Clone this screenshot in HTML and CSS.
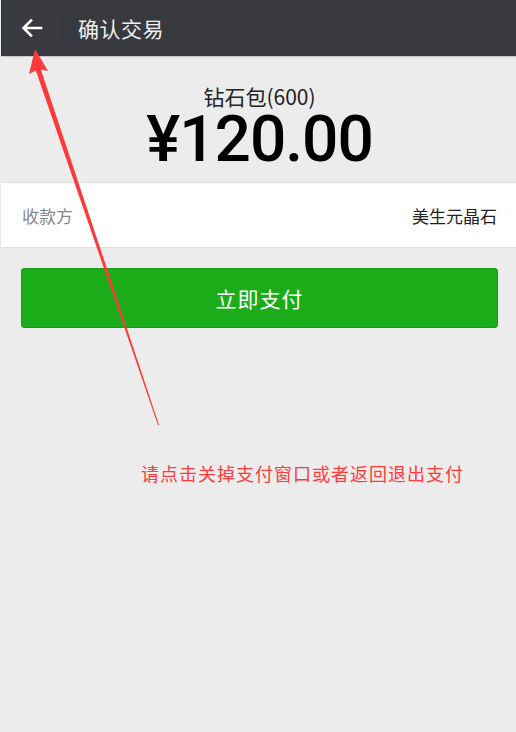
FILE: index.html
```html
<!DOCTYPE html>
<html lang="zh-CN">
<head>
<meta charset="utf-8">
<title>确认交易</title>
<link rel="stylesheet" href="styles.css">
</head>
<body>
<div class="page">
  <header class="topbar">
    <span class="back">
      <svg width="22" height="20" viewBox="0 0 22 20"><path d="M20 10H3M10 2.5L2.5 10L10 17.5" fill="none" stroke="#fff" stroke-width="2.6" stroke-linecap="square"/></svg>
    </span>
    <span class="divider"></span>
    <h1 class="title">确认交易</h1>
  </header>
  <section class="summary">
    <div class="product">钻石包(600)</div>
    <div class="price">¥120.00</div>
  </section>
  <div class="row">
    <span class="label">收款方</span>
    <span class="value">美生元晶石</span>
  </div>
  <div class="actions">
    <button class="pay">立即支付</button>
  </div>
  <p class="hint">请点击关掉支付窗口或者返回退出支付</p>
  <svg class="annot" width="516" height="732" viewBox="0 0 516 732">
    <polygon points="35,49 48,71 40.8,69.5 159,425 158,425.3 35.8,70.5 29,74" fill="#fc3a3a"/>
  </svg>
</div>
</body>
</html>
```
FILE: styles.css
```css
html, body {
  margin: 0;
  padding: 0;
}
body {
  background: #ececec;
  font-family: "Noto Sans CJK SC", "Noto Sans", sans-serif;
  width: 516px;
  height: 732px;
  overflow: hidden;
}
.page {
  position: relative;
  height: 732px;
  background: #ececec;
  border-left: 1px solid #e3ebf5;
  box-sizing: border-box;
}
.topbar {
  height: 56px;
  background: #393a3f;
  border-bottom: 1px solid #c9c9c9;
  display: flex;
  align-items: center;
  box-sizing: content-box;
}
.back {
  width: 22px;
  height: 20px;
  margin-left: 20px;
  display: flex;
}
.divider {
  width: 1px;
  height: 32px;
  background: #2f3034;
  margin-left: 19px;
}
.title {
  margin: 0 0 0 15px;
  font-size: 21px;
  font-weight: 400;
  color: #f0f0f0;
  line-height: 1;
  letter-spacing: 0.5px;
}
.summary {
  text-align: center;
  padding-top: 26px;
  height: 125px;
  box-sizing: border-box;
}
.product {
  font-size: 21px;
  line-height: 26px;
  color: #222;
  padding-left: 2px;
}
.price {
  font-family: Roboto, "Liberation Sans", sans-serif;
  font-size: 64px;
  line-height: 62px;
  color: #000;
  font-weight: 500;
  letter-spacing: -1px;
  padding-left: 2px;
}
.row {
  height: 64px;
  background: #fff;
  border-top: 1px solid #e0e0e0;
  border-bottom: 1px solid #e0e0e0;
  display: flex;
  align-items: center;
  justify-content: space-between;
  padding: 0 19px 0 21px;
  font-size: 17px;
}
.label { color: #888; }
.value { color: #222; }
.actions {
  padding: 20px 18px 0 20px;
}
.pay {
  display: block;
  width: 100%;
  height: 60px;
  border: 1px solid #179e16;
  border-radius: 3px;
  background: #1aad19;
  color: #fff;
  font-family: "Noto Sans CJK SC", sans-serif;
  font-size: 21px;
  letter-spacing: 1px;
  padding: 0;
}
.hint {
  margin: 133px 0 0 140px;
  color: #ff3b3b;
  font-size: 18px;
  letter-spacing: 1px;
  line-height: 24px;
}
.annot {
  position: absolute;
  left: -1px;
  top: 0;
  pointer-events: none;
}
```
